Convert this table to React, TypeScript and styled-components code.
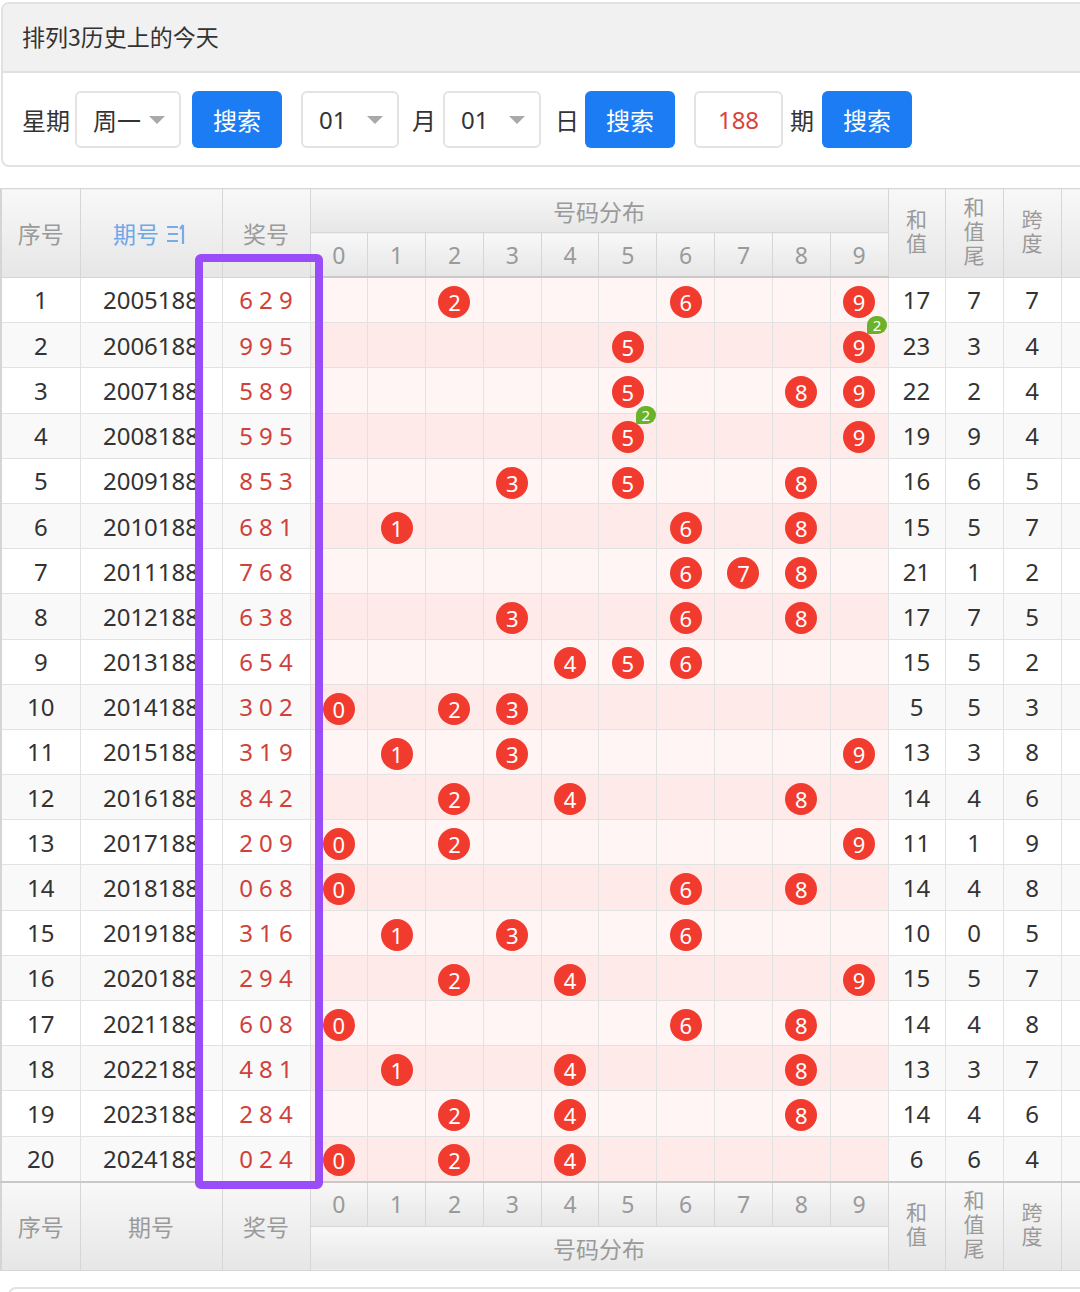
import React from "react";
import styled, { createGlobalStyle } from "styled-components";

const GlobalStyle = createGlobalStyle`
  html, body {
    margin: 0;
    padding: 0;
    background: #fff;
    overflow-x: hidden;
  }
  body {
    font-family: "Noto Sans", "Noto Sans CJK SC", sans-serif;
    color: #333;
    width: 1080px;
  }
`;

const Page = styled.div`
  width: 1080px;
  overflow: hidden;
  padding-top: 2px;
`;

const Panel = styled.section`
  width: 1120px;
  margin-left: 1px;
  border: 2px solid #e2e2e2;
  border-radius: 8px;
  overflow: hidden;
  background: #fff;
`;

const PanelHeader = styled.div`
  box-sizing: border-box;
  height: 69px;
  background: #f1f1f1;
  border-bottom: 2px solid #e0e0e0;
  display: flex;
  align-items: center;
  padding: 0 0 3px 19px;
  font-size: 23px;
  color: #333;
  font-family: "Noto Sans CJK SC", sans-serif;
`;

const PanelBody = styled.div`
  display: flex;
  align-items: center;
  padding: 18px 19px 17px;
`;

const Label = styled.span<{ $ml?: number }>`
  font-family: "Noto Sans CJK SC", sans-serif;
  font-size: 24px;
  color: #333;
  margin-left: ${(p) => p.$ml ?? 0}px;
  line-height: 57px;
`;

const Select = styled.div<{ $w: number; $ml?: number }>`
  box-sizing: border-box;
  width: ${(p) => p.$w}px;
  height: 57px;
  margin-left: ${(p) => p.$ml ?? 0}px;
  border: 2px solid #e3e3e3;
  border-radius: 6px;
  display: flex;
  align-items: center;
  justify-content: space-between;
  padding: 0 14px 0 16px;
  font-size: 24px;
  font-family: "Noto Sans", "Noto Sans CJK SC", sans-serif;
  color: #333;
`;

const Caret = styled.span`
  width: 0;
  height: 0;
  border-left: 8px solid transparent;
  border-right: 8px solid transparent;
  border-top: 8px solid #a9a9a9;
`;

const Button = styled.button<{ $ml?: number }>`
  width: 90px;
  height: 57px;
  margin-left: ${(p) => p.$ml ?? 0}px;
  border: none;
  border-radius: 6px;
  background: #1b7cf3;
  color: #fff;
  font-size: 24px;
  font-family: "Noto Sans CJK SC", sans-serif;
  padding: 0;
`;

const NumInput = styled.div<{ $ml?: number }>`
  box-sizing: border-box;
  width: 89px;
  height: 57px;
  margin-left: ${(p) => p.$ml ?? 0}px;
  border: 2px solid #e3e3e3;
  border-radius: 6px;
  display: flex;
  align-items: center;
  justify-content: center;
  color: #d9443a;
  font-size: 24px;
`;

const TableWrap = styled.div`
  position: relative;
  margin-top: 21px;
  width: 1140px;
`;

const Table = styled.table`
  border-collapse: collapse;
  table-layout: fixed;
  width: 1121px;
  border-left: 2px solid #d5d5d5;
`;

const Th = styled.th`
  background: linear-gradient(#f8f8f8, #e6e6e6);
  color: #9a9a9a;
  font-weight: normal;
  font-size: 23px;
  font-family: "Noto Sans", "Noto Sans CJK SC", sans-serif;
  border: 1px solid #d6d6d6;
  height: 43px;
  padding: 0;
  text-align: center;
  vertical-align: middle;
`;

const SortTh = styled(Th)`
  color: #70a7e6;
`;

const HeadRow = styled.tr<{ $edge?: "top" | "bottom" }>`
  & > th {
    ${(p) => (p.$edge === "bottom" ? "border-bottom: 2px solid #c9c9c9;" : "")}
    ${(p) => (p.$edge === "top" ? "border-top: 2px solid #c9c9c9;" : "")}
  }
`;

const Td = styled.td<{ $alt: boolean; $kind?: "prize" | "digit" | "plain" }>`
  height: 44.2px;
  padding: 0;
  border: 1px solid #e2e2e2;
  text-align: center;
  vertical-align: middle;
  font-size: 24px;
  white-space: nowrap;
  overflow: hidden;
  color: ${(p) => (p.$kind === "prize" ? "#d0413b" : "#333")};
  background: ${(p) =>
    p.$kind === "digit"
      ? p.$alt
        ? "#ffeaea"
        : "#fff5f4"
      : p.$alt
      ? "#f9f9f9"
      : "#ffffff"};
  ${(p) => (p.$kind === "digit" ? "overflow: visible;" : "")}
`;

const VertText = styled.span`
  display: inline-block;
  writing-mode: vertical-rl;
  text-orientation: upright;
  font-size: 21px;
  line-height: 24px;
  letter-spacing: 3px;
  font-family: "Noto Sans CJK SC", sans-serif;
  vertical-align: middle;
`;

const CjkText = styled.span`
  font-family: "Noto Sans CJK SC", sans-serif;
`;

const SortIcon = styled.svg`
  vertical-align: -3px;
  margin-left: 6px;
`;

const Ball = styled.span`
  position: relative;
  display: inline-flex;
  align-items: center;
  justify-content: center;
  width: 32px;
  height: 32px;
  border-radius: 50%;
  background: #f23b2f;
  color: #fff;
  font-size: 22px;
  line-height: 1;
  vertical-align: middle;
`;

const Badge = styled.span`
  position: absolute;
  left: 24px;
  top: -15px;
  width: 20px;
  height: 18px;
  border-radius: 10px 10px 10px 0;
  background: #69b22a;
  color: #fff;
  font-size: 15px;
  line-height: 18px;
  text-align: center;
  z-index: 2;
`;

const Highlight = styled.div`
  position: absolute;
  left: 195px;
  top: 66px;
  width: 128px;
  height: 935px;
  box-sizing: border-box;
  border: 8px solid #9b4cf9;
  border-radius: 6px;
  pointer-events: none;
  z-index: 3;
`;

const NextPanel = styled.div`
  margin: 16px 0 0 8px;
  width: 1120px;
  height: 40px;
  border: 2px solid #e2e2e2;
  border-radius: 8px;
`;

const draws: [string, string][] = [
  ["2005188", "629"],
  ["2006188", "995"],
  ["2007188", "589"],
  ["2008188", "595"],
  ["2009188", "853"],
  ["2010188", "681"],
  ["2011188", "768"],
  ["2012188", "638"],
  ["2013188", "654"],
  ["2014188", "302"],
  ["2015188", "319"],
  ["2016188", "842"],
  ["2017188", "209"],
  ["2018188", "068"],
  ["2019188", "316"],
  ["2020188", "294"],
  ["2021188", "608"],
  ["2022188", "481"],
  ["2023188", "284"],
  ["2024188", "024"],
];

const digits = [0, 1, 2, 3, 4, 5, 6, 7, 8, 9];

const SortGlyph = () => (
  <SortIcon width="24" height="24" viewBox="0 0 24 24" fill="none" stroke="#7aabe8" strokeWidth="2.2">
    <path d="M2 5h11M3 12h10M2 19h11" />
    <path d="M18 3v19M18 3l-3 4" />
  </SortIcon>
);

export default function App() {
  return (
    <Page>
      <GlobalStyle />
      <Panel>
        <PanelHeader>排列3历史上的今天</PanelHeader>
        <PanelBody>
          <Label>星期</Label>
          <Select $w={106} $ml={5}>
            <CjkText>周一</CjkText>
            <Caret />
          </Select>
          <Button $ml={11}>搜索</Button>
          <Select $w={98} $ml={19}>
            <span>01</span>
            <Caret />
          </Select>
          <Label $ml={13}>月</Label>
          <Select $w={98} $ml={7}>
            <span>01</span>
            <Caret />
          </Select>
          <Label $ml={14}>日</Label>
          <Button $ml={6}>搜索</Button>
          <NumInput $ml={19}>188</NumInput>
          <Label $ml={7}>期</Label>
          <Button $ml={8}>搜索</Button>
        </PanelBody>
      </Panel>

      <TableWrap>
        <Table>
          <colgroup>
            <col style={{ width: 79 }} />
            <col style={{ width: 142 }} />
            <col style={{ width: 88 }} />
            {digits.map((d) => (
              <col key={d} style={{ width: 57.8 }} />
            ))}
            <col style={{ width: 57 }} />
            <col style={{ width: 58 }} />
            <col style={{ width: 58 }} />
            <col style={{ width: 60 }} />
          </colgroup>
          <thead>
            <tr>
              <Th rowSpan={2}>
                <CjkText>序号</CjkText>
              </Th>
              <SortTh rowSpan={2}>
                <CjkText>期号</CjkText>
                <SortGlyph />
              </SortTh>
              <Th rowSpan={2}>
                <CjkText>奖号</CjkText>
              </Th>
              <Th colSpan={10}>
                <CjkText>号码分布</CjkText>
              </Th>
              <Th rowSpan={2}>
                <VertText>和值</VertText>
              </Th>
              <Th rowSpan={2}>
                <VertText>和值尾</VertText>
              </Th>
              <Th rowSpan={2}>
                <VertText>跨度</VertText>
              </Th>
              <Th rowSpan={2} />
            </tr>
            <HeadRow $edge="bottom">
              {digits.map((d) => (
                <Th key={d}>{d}</Th>
              ))}
            </HeadRow>
          </thead>
          <tbody>
            {draws.map(([issue, num], i) => {
              const ds = num.split("").map(Number);
              const sum = ds.reduce((a, b) => a + b, 0);
              const span = Math.max(...ds) - Math.min(...ds);
              const alt = i % 2 === 1;
              return (
                <tr key={issue}>
                  <Td $alt={alt}>{i + 1}</Td>
                  <Td $alt={alt}>{issue}</Td>
                  <Td $alt={alt} $kind="prize">
                    {ds.join(" ")}
                  </Td>
                  {digits.map((d) => {
                    const count = ds.filter((x) => x === d).length;
                    return (
                      <Td key={d} $alt={alt} $kind="digit">
                        {count > 0 && (
                          <Ball>
                            {d}
                            {count > 1 && <Badge>{count}</Badge>}
                          </Ball>
                        )}
                      </Td>
                    );
                  })}
                  <Td $alt={alt}>{sum}</Td>
                  <Td $alt={alt}>{sum % 10}</Td>
                  <Td $alt={alt}>{span}</Td>
                  <Td $alt={alt} />
                </tr>
              );
            })}
          </tbody>
          <tfoot>
            <HeadRow $edge="top">
              <Th rowSpan={2}>
                <CjkText>序号</CjkText>
              </Th>
              <Th rowSpan={2}>
                <CjkText>期号</CjkText>
              </Th>
              <Th rowSpan={2}>
                <CjkText>奖号</CjkText>
              </Th>
              {digits.map((d) => (
                <Th key={d}>{d}</Th>
              ))}
              <Th rowSpan={2}>
                <VertText>和值</VertText>
              </Th>
              <Th rowSpan={2}>
                <VertText>和值尾</VertText>
              </Th>
              <Th rowSpan={2}>
                <VertText>跨度</VertText>
              </Th>
              <Th rowSpan={2} />
            </HeadRow>
            <tr>
              <Th colSpan={10}>
                <CjkText>号码分布</CjkText>
              </Th>
            </tr>
          </tfoot>
        </Table>
        <Highlight />
      </TableWrap>
      <NextPanel />
    </Page>
  );
}
